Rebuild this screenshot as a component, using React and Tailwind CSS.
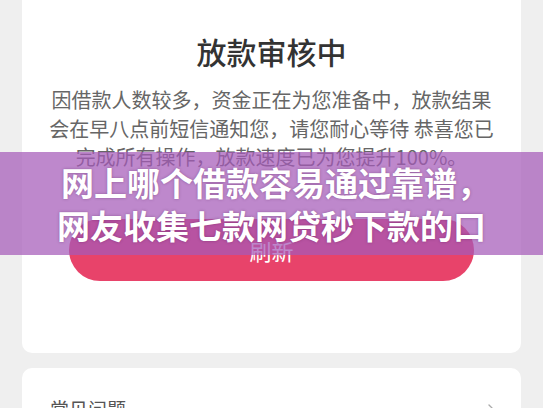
import { ChevronRight } from "lucide-react";

export default function App() {
  return (
    <div className="relative w-[543px] h-[408px] overflow-hidden bg-[#efefef] font-['Noto_Sans_CJK_SC',sans-serif]">
      <div className="mx-[22px] bg-white rounded-b-[10px] pt-[29px] pb-[72px] flex flex-col items-center">
        <h2 className="text-[30px] leading-[45px] text-[#333] font-medium">放款审核中</h2>
        <p className="mt-[12px] w-[452px] text-center text-[20px] leading-[28.5px] text-[#666]">
          因借款人数较多，资金正在为您准备中，放款结果会在早八点前短信通知您，请您耐心等待 恭喜您已完成所有操作，放款速度已为您提升100%。
        </p>
        <button className="mt-[47px] w-[405px] h-[62px] rounded-full bg-[#e8436a] text-white text-[22px] flex items-center justify-center pt-[2px]">
          刷新
        </button>
      </div>

      <div className="mx-[22px] mt-[15px] bg-white rounded-[10px] pt-[27px] pl-[28px] pr-[22px] h-[80px] flex items-start justify-between">
        <span className="text-[19px] leading-[28px] text-[#555]">常见问题</span>
        <ChevronRight className="w-[16px] h-[16px] text-[#aaa] mt-[6px]" strokeWidth={2} />
      </div>

      <div className="absolute left-0 top-[152px] w-full h-[103px] bg-[rgba(165,90,185,0.72)] flex flex-col items-center justify-center">
        <div className="text-white font-bold text-[33px] leading-[43px] [text-shadow:0_0_3px_rgba(60,0,60,0.35)] pl-[8px]">网上哪个借款容易通过靠谱，</div>
        <div className="text-white font-bold text-[33px] leading-[43px] [text-shadow:0_0_3px_rgba(60,0,60,0.35)]">网友收集七款网贷秒下款的口</div>
      </div>
    </div>
  );
}
